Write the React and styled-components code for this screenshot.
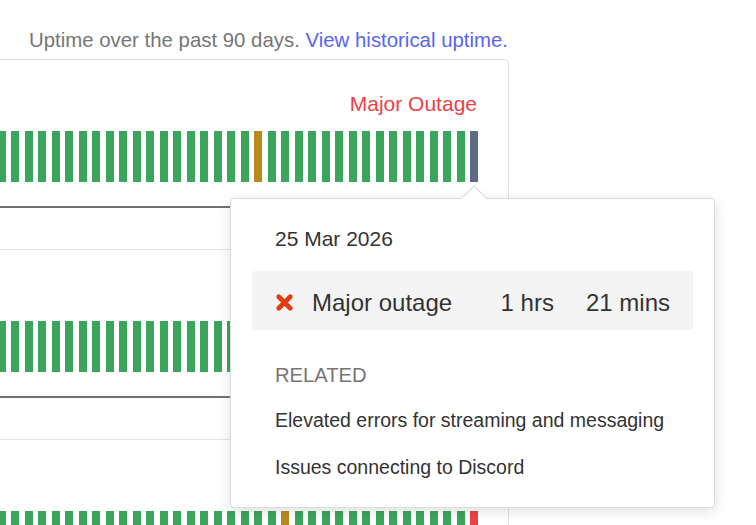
import React from "react";
import styled, { createGlobalStyle } from "styled-components";

const GlobalStyle = createGlobalStyle`
  html, body {
    margin: 0;
    padding: 0;
    background: #ffffff;
    overflow: hidden;
  }
  body {
    font-family: "Liberation Sans", Arial, Helvetica, sans-serif;
    color: #333333;
  }
`;

const colors = {
  ok: "#3ba55c",
  partial: "#b9891e",
  major: "#ed4245",
  nodata: "#5e6a86",
};

const makeDays = (overrides) =>
  Array.from({ length: 90 }, (_, i) => overrides[i] || "ok");

const components = [
  {
    id: "api",
    status: "Major Outage",
    statusColor: colors.major,
    days: makeDays({ 73: "partial", 89: "nodata" }),
  },
  {
    id: "gateway",
    status: "Operational",
    statusColor: colors.ok,
    days: makeDays({}),
  },
  {
    id: "media",
    status: "Major Outage",
    statusColor: colors.major,
    days: makeDays({ 75: "partial", 89: "major" }),
  },
];

export default function App() {
  return (
    <>
      <GlobalStyle />
      <Page>
        <UptimeNote>
          Uptime over the past 90 days. <Link>View historical uptime.</Link>
        </UptimeNote>
        <Card>
          {components.map((c) => (
            <Row key={c.id}>
              <StatusLine color={c.statusColor}>{c.status}</StatusLine>
              <Bars>
                {c.days.map((d, i) => (
                  <Bar key={i} color={colors[d]} />
                ))}
              </Bars>
              <Legend>
                <LegendRule />
              </Legend>
            </Row>
          ))}
        </Card>

        <Tooltip>
          <TooltipDate>25 Mar 2026</TooltipDate>
          <OutageBox>
            <CrossIcon viewBox="0 0 16 16">
              <path
                d="M2.6 2.6 L13.4 13.4 M13.4 2.6 L2.6 13.4"
                stroke="#e23b12"
                strokeWidth="4.4"
                strokeLinecap="round"
              />
            </CrossIcon>
            <OutageName>Major outage</OutageName>
            <Duration>1 hrs</Duration>
            <Duration $gap>21 mins</Duration>
          </OutageBox>
          <RelatedHeading>Related</RelatedHeading>
          <RelatedItem>Elevated errors for streaming and messaging</RelatedItem>
          <RelatedItem $spaced>Issues connecting to Discord</RelatedItem>
        </Tooltip>
      </Page>
    </>
  );
}

const Page = styled.div`
  position: relative;
  width: 509px;
  padding-top: 25px;
`;

const UptimeNote = styled.div`
  text-align: right;
  padding-right: 1px;
  font-size: 20.4px;
  line-height: 30px;
  color: #767676;
  margin-bottom: 4px;
`;

const Link = styled.a`
  color: #5865f2;
  text-decoration: none;
  cursor: pointer;
`;

const Card = styled.div`
  margin-left: -40px;
  border: 1px solid #e0e0e0;
  border-bottom: none;
  border-radius: 5px 5px 0 0;
  background: #ffffff;
`;

const Row = styled.div`
  padding: 30px 30px 30px 0;
  border-bottom: 1px solid #e4e4e4;
`;

const StatusLine = styled.div`
  display: flex;
  justify-content: flex-end;
  padding-right: 1px;
  font-size: 21px;
  line-height: 27px;
  color: ${(p) => p.color};
`;

const Bars = styled.div`
  display: flex;
  justify-content: flex-end;
  gap: 5.5px;
  height: 51px;
  margin-top: 14px;
  overflow: hidden;
`;

const Bar = styled.div`
  flex: 0 0 8px;
  height: 100%;
  background: ${(p) => p.color};
`;

const Legend = styled.div`
  display: flex;
  align-items: center;
  height: 24px;
  margin-top: 13px;
`;

const LegendRule = styled.div`
  flex: 1;
  height: 2px;
  background: #727272;
`;

const Tooltip = styled.div`
  position: absolute;
  left: 230px;
  top: 198px;
  width: 485px;
  box-sizing: border-box;
  padding: 25px 21px 25px;
  background: #ffffff;
  border: 1px solid #dcdcdc;
  border-radius: 4px;
  box-shadow: 0 3px 14px rgba(0, 0, 0, 0.13);

  &::before {
    content: "";
    position: absolute;
    left: 234px;
    top: -10px;
    width: 17px;
    height: 17px;
    background: #ffffff;
    border-top: 1px solid #dcdcdc;
    border-left: 1px solid #dcdcdc;
    transform: rotate(45deg);
  }
`;

const TooltipDate = styled.div`
  position: relative;
  padding-left: 23px;
  font-size: 21px;
  line-height: 30px;
  color: #333333;
`;

const OutageBox = styled.div`
  display: flex;
  align-items: center;
  margin-top: 17px;
  padding: 17px 23px 13px 24px;
  background: #f4f4f4;
  border-radius: 3px;
  font-size: 24px;
  line-height: 29px;
  color: #333333;
`;

const CrossIcon = styled.svg`
  width: 17px;
  height: 17px;
  margin-right: 19px;
  flex: 0 0 17px;
`;

const OutageName = styled.span`
  flex: 1;
`;

const Duration = styled.span`
  margin-left: ${(p) => (p.$gap ? "32px" : "0")};
`;

const RelatedHeading = styled.div`
  margin-top: 30px;
  padding-left: 23px;
  font-size: 20.2px;
  line-height: 30px;
  color: #757575;
  text-transform: uppercase;
`;

const RelatedItem = styled.div`
  margin-top: ${(p) => (p.$spaced ? "17px" : "15px")};
  padding-left: 23px;
  font-size: 19.5px;
  line-height: 30px;
  color: #333333;
`;
